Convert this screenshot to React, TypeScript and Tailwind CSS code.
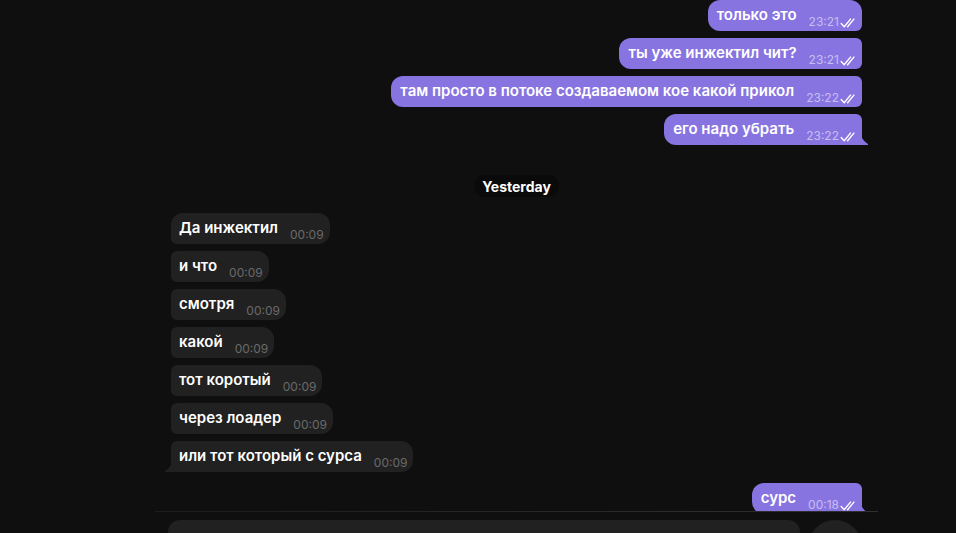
import React from "react";

type Pos = "first" | "middle" | "last";

const OUT_TOP = [
  { text: "только это", time: "23:21" },
  { text: "ты уже инжектил чит?", time: "23:21" },
  { text: "там просто в потоке создаваемом кое какой прикол", time: "23:22" },
  { text: "его надо убрать", time: "23:22" },
];

const INCOMING = [
  "Да инжектил",
  "и что",
  "смотря",
  "какой",
  "тот коротый",
  "через лоадер",
  "или тот который с сурса",
];

const posOf = (i: number, n: number): Pos =>
  i === n - 1 ? "last" : i === 0 ? "first" : "middle";

const Checks = () => (
  <svg width="17" height="10" viewBox="0 0 17 10" fill="none" className="ml-[1px] mb-[3px]">
    <path d="M1.2 5.6l3 3.1 6.3-7.6" stroke="white" strokeWidth="1.4" strokeLinecap="round" strokeLinejoin="round" />
    <path d="M7.6 8.7l6.3-7.6" stroke="white" strokeWidth="1.4" strokeLinecap="round" />
  </svg>
);

const TailRight = () => (
  <svg width="10" height="18" viewBox="0 0 10 18" className="absolute bottom-0 -right-[7px]">
    <path d="M0 0 C1 9 4 14 9 17 Q9.6 18 8.4 18 L0 18 Z" fill="#8774e1" />
  </svg>
);

const TailLeft = () => (
  <svg width="10" height="18" viewBox="0 0 10 18" className="absolute bottom-0 -left-[7px]">
    <path d="M10 0 C9 9 6 14 1 17 Q0.4 18 1.6 18 L10 18 Z" fill="#212121" />
  </svg>
);

const Outgoing = ({ text, time, pos }: { text: string; time: string; pos: Pos }) => {
  const radius =
    pos === "first"
      ? "rounded-[12px] rounded-br-[6px]"
      : pos === "middle"
        ? "rounded-[12px] rounded-r-[6px]"
        : "rounded-[12px] rounded-tr-[6px] rounded-br-none";
  return (
    <div className={`relative shrink-0 flex items-end h-[31px] pl-[9px] pr-[5px] bg-[#8774e1] ${radius}`}>
      <span className="self-center mb-[1px] text-[15px] leading-[20px] font-semibold text-white whitespace-nowrap">
        {text}
      </span>
      <span className="ml-[12px] mb-[2px] text-[12px] leading-[14px] text-[#c7bff2]">{time}</span>
      <Checks />
      {pos === "last" && <TailRight />}
    </div>
  );
};

const Incoming = ({ text, pos }: { text: string; pos: Pos }) => {
  const radius =
    pos === "first"
      ? "rounded-[12px] rounded-bl-[6px]"
      : pos === "middle"
        ? "rounded-[12px] rounded-l-[6px]"
        : "rounded-[12px] rounded-tl-[6px] rounded-bl-none";
  return (
    <div className={`relative shrink-0 flex items-end h-[31px] pl-[8px] pr-[6px] bg-[#212121] ${radius}`}>
      <span className="self-center mb-[1px] text-[15px] leading-[20px] font-semibold text-white whitespace-nowrap">
        {text}
      </span>
      <span className="ml-[12px] mb-[2px] text-[12px] leading-[14px] text-[#6a6a6a]">00:09</span>
      {pos === "last" && <TailLeft />}
    </div>
  );
};

export default function App() {
  return (
    <div
      className="w-[956px] h-[533px] overflow-hidden bg-[#0f0f0f] pl-[155px]"
      style={{ fontFamily: "Inter, 'Noto Sans', sans-serif" }}
    >
      <div className="w-[723px] h-full flex flex-col">
        <div className="shrink-0 h-[511px] overflow-hidden pl-[16px] pr-[16px] flex flex-col">
          <div className="shrink-0 flex flex-col items-end gap-[7px]">
            {OUT_TOP.map((m, i) => (
              <Outgoing key={i} text={m.text} time={m.time} pos={posOf(i, OUT_TOP.length)} />
            ))}
          </div>

          <div className="shrink-0 self-center mt-[30px] h-[22px] px-[8px] flex items-center rounded-full bg-[#0a0a0a] text-[14px] font-bold text-white">
            Yesterday
          </div>

          <div className="shrink-0 mt-[16px] flex flex-col items-start gap-[7px]">
            {INCOMING.map((t, i) => (
              <Incoming key={i} text={t} pos={posOf(i, INCOMING.length)} />
            ))}
          </div>

          <div className="shrink-0 mt-[11px] flex flex-col items-end">
            <Outgoing text="сурс" time="00:18" pos="last" />
          </div>
        </div>

        <div className="shrink-0 h-px bg-gradient-to-r from-[#1c1c1c] to-[#303030]" />

        <div className="shrink-0 flex gap-[8px] pl-[13px] pr-[16px] pt-[8px]">
          <div className="flex-1 h-[54px] rounded-[12px] bg-[#212121]" />
          <div className="w-[54px] h-[54px] rounded-full bg-[#212121]" />
        </div>
      </div>
    </div>
  );
}
